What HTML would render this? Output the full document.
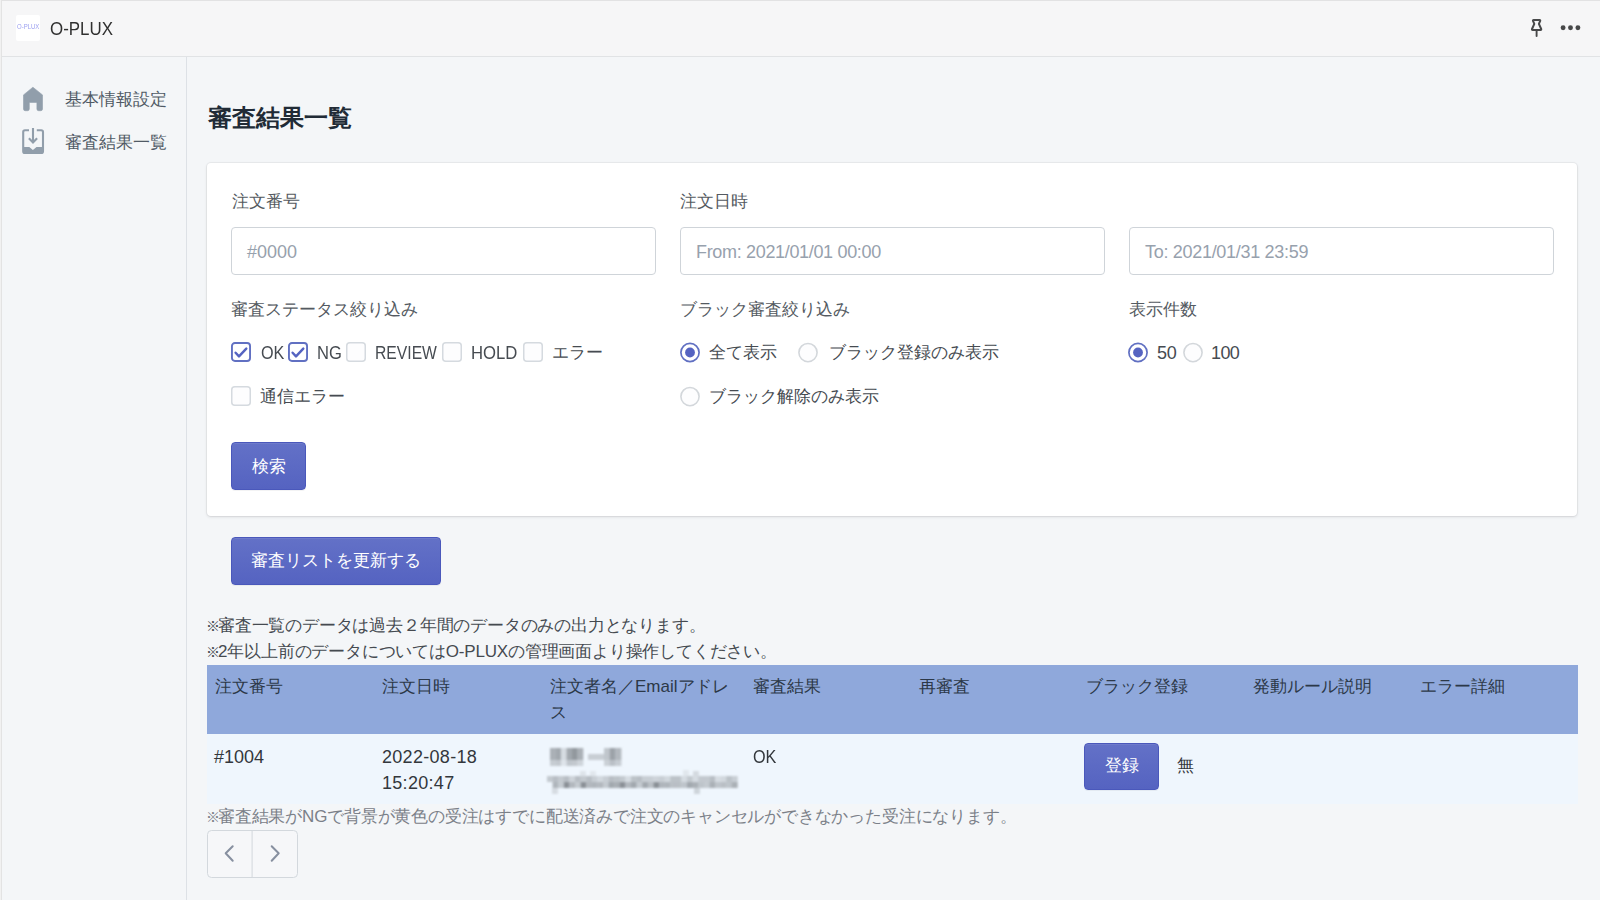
<!DOCTYPE html>
<html lang="ja">
<head>
<meta charset="utf-8">
<title>O-PLUX</title>
<style>
*{box-sizing:border-box;}
html,body{margin:0;padding:0;}
body{width:1600px;height:900px;overflow:hidden;position:relative;background:#f4f6f8;font-family:"Liberation Sans",sans-serif;color:#212b36;font-size:17px;}
.abs{position:absolute;}
svg{display:block;}
.L{font-size:18px !important;}
.topbar{left:0;top:0;width:1600px;height:57px;background:#f6f6f7;border-top:1px solid #e2e2e3;border-bottom:1px solid #e1e3e5;}
.lborder{left:0;top:0;width:2px;height:900px;background:linear-gradient(90deg,#f1f1f1 0,#f1f1f1 1px,#e3e3e3 1px,#e3e3e3 2px);}
.logo{left:16px;top:15px;width:24px;height:26px;background:#fff;border-radius:2px;}
.logo span{position:absolute;left:1.3px;top:7px;font-size:7.5px;line-height:10px;color:#9a9ef0;transform:scaleX(0.8);transform-origin:0 0;white-space:nowrap;}
.apptitle{left:50px;top:17px;font-size:19px;line-height:24px;transform:scaleX(0.89);transform-origin:0 0;color:#303030;}
.side{left:0;top:57px;width:187px;height:843px;border-right:1px solid #dde1e6;}
.nav{left:65px;font-size:17px;line-height:22px;color:#505a65;white-space:nowrap;}
h1{position:absolute;margin:0;left:208px;top:102px;font-size:24px;line-height:32px;font-weight:bold;color:#212b36;white-space:nowrap;}
.card{left:207px;top:163px;width:1370px;height:353px;background:#fff;border-radius:4px;box-shadow:0 0 0 1px rgba(63,63,68,.05),0 1px 3px 0 rgba(63,63,68,.15);}
.lbl{font-size:17px;line-height:22px;color:#545a61;white-space:nowrap;}
.input{height:48px;width:425px;border:1px solid #cfd4d9;border-radius:4px;background:#fff;}
.input span{position:absolute;left:15px;top:12px;font-size:18px;line-height:24px;color:#97a1ad;white-space:nowrap;}
.opt{font-size:17px;line-height:22px;color:#464b51;white-space:nowrap;}
.btn{height:48px;border-radius:4px;background:linear-gradient(180deg,#6371c7,#5563c1);border:1px solid #4a58bb;box-shadow:inset 0 1px 0 0 #6f7bcb,0 1px 0 0 rgba(22,29,37,.05);color:#fff;font-size:17px;line-height:22px;}
.btn span{position:absolute;top:12px;left:0;right:0;text-align:center;white-space:nowrap;}
.note{left:206px;font-size:17px;letter-spacing:-0.19px;line-height:26px;color:#454a50;white-space:nowrap;}
.k{font-size:13.5px;letter-spacing:-2px;}
.thead{left:207px;top:665px;width:1371px;height:69px;background:#8fa8db;}
.trow{left:207px;top:734px;width:1371px;height:70px;background:#eff6fd;}
.th{top:674px;font-size:17px;line-height:26px;color:#2c3848;white-space:nowrap;}
.td{font-size:17px;line-height:26px;color:#33373c;white-space:nowrap;}
</style>
</head>
<body>
<div class="abs topbar"></div>
<div class="abs logo"><span>O-PLUX</span></div>
<div class="abs apptitle">O-PLUX</div>
<svg class="abs" style="left:1522px;top:12px" width="30" height="30" viewBox="0 0 30 30">
  <path d="M11.6 8 H17.6 Q18.5 8 18.2 8.9 L16.9 11.8 L19.2 17 Q19.5 17.9 18.6 17.9 H10.6 Q9.7 17.9 10 17 L12.3 11.8 L11 8.9 Q10.7 8 11.6 8 Z" fill="none" stroke="#474849" stroke-width="2" stroke-linejoin="round"/>
  <path d="M14.6 18.5 V24" fill="none" stroke="#474849" stroke-width="1.9" stroke-linecap="round"/>
</svg>
<svg class="abs" style="left:1556px;top:18px" width="30" height="20" viewBox="0 0 30 20">
  <circle cx="7.1" cy="9.8" r="2.45" fill="#474849"/><circle cx="14.5" cy="9.8" r="2.45" fill="#474849"/><circle cx="21.9" cy="9.8" r="2.45" fill="#474849"/>
</svg>

<div class="abs side"></div>
<div class="abs lborder"></div>
<svg class="abs" style="left:18px;top:82px" width="30" height="34" viewBox="0 0 30 34">
  <path d="M14.9 5.2 L24.5 12.9 V27 Q24.5 28.7 22.8 28.7 H20.6 Q18.9 28.7 18.9 27 V20.4 H11.3 V27 Q11.3 28.7 9.6 28.7 H7.2 Q5.5 28.7 5.5 27 V12.9 Z" fill="#919eab" stroke="#919eab" stroke-width="0.6" stroke-linejoin="round"/>
</svg>
<div class="abs nav" style="top:89px">基本情報設定</div>
<svg class="abs" style="left:18px;top:124px" width="30" height="34" viewBox="0 0 30 34">
  <path d="M11 6.3 H7 Q5.2 6.3 5.2 8.1 V27.2 Q5.2 29 7 29 H23.2 Q25 29 25 27.2 V8.1 Q25 6.3 23.2 6.3 H18.8" fill="none" stroke="#919eab" stroke-width="2.1"/>
  <path d="M5 23 H11.3 L14.9 25.9 L18.5 23 H25.2 V27.2 Q25.2 29.3 23 29.3 H7 Q5 29.3 5 27.2 Z" fill="#919eab"/>
  <path d="M15 4 V18 M10.9 14.2 L15 18.4 L19.1 14.2" fill="none" stroke="#919eab" stroke-width="2.1"/>
</svg>
<div class="abs nav" style="top:132px">審査結果一覧</div>

<h1>審査結果一覧</h1>

<div class="abs card"></div>
<div class="abs lbl" style="left:232px;top:191px">注文番号</div>
<div class="abs lbl" style="left:680px;top:191px">注文日時</div>
<div class="abs input" style="left:231px;top:227px"><span>#0000</span></div>
<div class="abs input" style="left:680px;top:227px"><span style="letter-spacing:-0.33px">From: 2021/01/01 00:00</span></div>
<div class="abs input" style="left:1129px;top:227px"><span style="letter-spacing:-0.3px">To: 2021/01/31 23:59</span></div>

<div class="abs lbl" style="left:231px;top:299px">審査ステータス絞り込み</div>
<div class="abs lbl" style="left:680px;top:299px">ブラック審査絞り込み</div>
<div class="abs lbl" style="left:1129px;top:299px">表示件数</div>

<div class="abs" style="left:231px;top:342px;width:20px;height:20px"><svg width="20" height="20" viewBox="0 0 20 20"><rect x="0.95" y="0.95" width="18.1" height="18.1" rx="3" fill="#fff" stroke="#6170c2" stroke-width="1.9"/><path d="M4.6 10.7 L8 14.4 L15.3 6.6" fill="none" stroke="#5563c1" stroke-width="2.4" stroke-linecap="round" stroke-linejoin="round"/></svg></div>
<div class="abs opt L" style="left:261px;top:342px;transform:scaleX(0.9);transform-origin:0 0">OK</div>
<div class="abs" style="left:288px;top:342px;width:20px;height:20px"><svg width="20" height="20" viewBox="0 0 20 20"><rect x="0.95" y="0.95" width="18.1" height="18.1" rx="3" fill="#fff" stroke="#6170c2" stroke-width="1.9"/><path d="M4.6 10.7 L8 14.4 L15.3 6.6" fill="none" stroke="#5563c1" stroke-width="2.4" stroke-linecap="round" stroke-linejoin="round"/></svg></div>
<div class="abs opt L" style="left:317px;top:342px;transform:scaleX(0.92);transform-origin:0 0">NG</div>
<div class="abs" style="left:346px;top:342px;width:20px;height:20px"><svg width="20" height="20" viewBox="0 0 20 20"><rect x="0.75" y="0.75" width="18.5" height="18.5" rx="3" fill="#fdfdfe" stroke="#d5dadf" stroke-width="1.5"/></svg></div>
<div class="abs opt L" style="left:375px;top:342px;transform:scaleX(0.872);transform-origin:0 0">REVIEW</div>
<div class="abs" style="left:442px;top:342px;width:20px;height:20px"><svg width="20" height="20" viewBox="0 0 20 20"><rect x="0.75" y="0.75" width="18.5" height="18.5" rx="3" fill="#fdfdfe" stroke="#d5dadf" stroke-width="1.5"/></svg></div>
<div class="abs opt L" style="left:471px;top:342px;transform:scaleX(0.928);transform-origin:0 0">HOLD</div>
<div class="abs" style="left:523px;top:342px;width:20px;height:20px"><svg width="20" height="20" viewBox="0 0 20 20"><rect x="0.75" y="0.75" width="18.5" height="18.5" rx="3" fill="#fdfdfe" stroke="#d5dadf" stroke-width="1.5"/></svg></div>
<div class="abs opt" style="left:552px;top:342px">エラー</div>
<div class="abs" style="left:231px;top:386px;width:20px;height:20px"><svg width="20" height="20" viewBox="0 0 20 20"><rect x="0.75" y="0.75" width="18.5" height="18.5" rx="3" fill="#fdfdfe" stroke="#d5dadf" stroke-width="1.5"/></svg></div>
<div class="abs opt" style="left:260px;top:386px">通信エラー</div>

<div class="abs" style="left:680px;top:342px;width:20px;height:21px"><svg width="20" height="21" viewBox="0 0 20 21"><circle cx="10" cy="10.5" r="9.1" fill="#fff" stroke="#6170c2" stroke-width="1.7"/><circle cx="10" cy="10.5" r="4.9" fill="#5563c1"/></svg></div>
<div class="abs opt" style="left:709px;top:342px">全て表示</div>
<div class="abs" style="left:798px;top:342px;width:20px;height:21px"><svg width="20" height="21" viewBox="0 0 20 21"><circle cx="10" cy="10.6" r="9.1" fill="#fdfdfe" stroke="#d3d7db" stroke-width="1.6"/></svg></div>
<div class="abs opt" style="left:829px;top:342px">ブラック登録のみ表示</div>
<div class="abs" style="left:680px;top:386px;width:20px;height:21px"><svg width="20" height="21" viewBox="0 0 20 21"><circle cx="10" cy="10.6" r="9.1" fill="#fdfdfe" stroke="#d3d7db" stroke-width="1.6"/></svg></div>
<div class="abs opt" style="left:709px;top:386px">ブラック解除のみ表示</div>

<div class="abs" style="left:1128px;top:342px;width:20px;height:21px"><svg width="20" height="21" viewBox="0 0 20 21"><circle cx="10" cy="10.5" r="9.1" fill="#fff" stroke="#6170c2" stroke-width="1.7"/><circle cx="10" cy="10.5" r="4.9" fill="#5563c1"/></svg></div>
<div class="abs opt L" style="left:1157px;top:342px;letter-spacing:-0.3px">50</div>
<div class="abs" style="left:1183px;top:342px;width:20px;height:21px"><svg width="20" height="21" viewBox="0 0 20 21"><circle cx="10" cy="10.6" r="9.1" fill="#fdfdfe" stroke="#d3d7db" stroke-width="1.6"/></svg></div>
<div class="abs opt L" style="left:1211px;top:342px;letter-spacing:-0.6px">100</div>

<div class="abs btn" style="left:231px;top:442px;width:75px"><span style="top:13px">検索</span></div>
<div class="abs btn" style="left:231px;top:537px;width:210px"><span>審査リストを更新する</span></div>

<div class="abs note" style="top:613px"><span class="k">※</span>審査一覧のデータは過去２年間のデータのみの出力となります。</div>
<div class="abs note" style="top:639px"><span class="k">※</span>2年以上前のデータについてはO-PLUXの管理画面より操作してください。</div>

<div class="abs thead"></div>
<div class="abs th" style="left:215px">注文番号</div>
<div class="abs th" style="left:382px">注文日時</div>
<div class="abs th" style="left:550px">注文者名／Emailアドレ<br>ス</div>
<div class="abs th" style="left:753px">審査結果</div>
<div class="abs th" style="left:919px">再審査</div>
<div class="abs th" style="left:1086px">ブラック登録</div>
<div class="abs th" style="left:1253px">発動ルール説明</div>
<div class="abs th" style="left:1420px">エラー詳細</div>

<div class="abs trow"></div>
<div class="abs td L" style="left:214px;top:744px">#1004</div>
<div class="abs td L" style="left:382px;top:744px;letter-spacing:0.3px">2022-08-18<br>15:20:47</div>
<div class="abs td L" style="left:753px;top:744px;transform:scaleX(0.9);transform-origin:0 0">OK</div>
<svg class="abs" style="left:540px;top:740px" width="200" height="60" viewBox="0 0 200 60" ><defs><filter id="bl" x="-5%" y="-20%" width="110%" height="140%"><feGaussianBlur stdDeviation="0.9"/></filter></defs><g filter="url(#bl)"><rect x="10.0" y="8" width="5.8" height="12" fill="rgb(170,176,182)"/><rect x="10.0" y="20" width="5.8" height="6" fill="rgb(198,204,210)"/><rect x="15.5" y="8" width="5.8" height="12" fill="rgb(162,168,174)"/><rect x="15.5" y="20" width="5.8" height="6" fill="rgb(194,200,206)"/><rect x="21.0" y="8" width="5.8" height="12" fill="rgb(214,220,226)"/><rect x="21.0" y="20" width="5.8" height="6" fill="rgb(222,228,234)"/><rect x="26.5" y="8" width="5.8" height="12" fill="rgb(162,168,174)"/><rect x="26.5" y="20" width="5.8" height="6" fill="rgb(192,198,204)"/><rect x="32.0" y="8" width="5.8" height="12" fill="rgb(146,152,158)"/><rect x="32.0" y="20" width="5.8" height="6" fill="rgb(194,200,206)"/><rect x="37.5" y="8" width="5.8" height="12" fill="rgb(170,176,182)"/><rect x="37.5" y="20" width="5.8" height="6" fill="rgb(206,212,218)"/><rect x="48.0" y="14" width="16.3" height="6" fill="rgb(200,206,212)"/><rect x="64.0" y="8" width="6.0" height="12" fill="rgb(192,198,204)"/><rect x="64.0" y="20" width="6.0" height="6" fill="rgb(202,208,214)"/><rect x="69.7" y="8" width="6.0" height="12" fill="rgb(156,162,168)"/><rect x="69.7" y="20" width="6.0" height="6" fill="rgb(186,192,198)"/><rect x="75.4" y="8" width="6.0" height="12" fill="rgb(178,184,190)"/><rect x="75.4" y="20" width="6.0" height="6" fill="rgb(198,204,210)"/><rect x="7.0" y="36" width="5.9" height="6" fill="rgb(195,201,207)"/><rect x="12.6" y="36" width="5.9" height="6" fill="rgb(184,190,196)"/><rect x="12.6" y="42" width="5.9" height="6" fill="rgb(175,181,187)"/><rect x="18.2" y="36" width="5.9" height="6" fill="rgb(195,201,207)"/><rect x="18.2" y="42" width="5.9" height="6" fill="rgb(196,202,208)"/><rect x="23.8" y="36" width="5.9" height="6" fill="rgb(184,190,196)"/><rect x="23.8" y="42" width="5.9" height="6" fill="rgb(138,144,150)"/><rect x="29.4" y="36" width="5.9" height="6" fill="rgb(205,211,217)"/><rect x="29.4" y="42" width="5.9" height="6" fill="rgb(178,184,190)"/><rect x="35.0" y="36" width="5.9" height="6" fill="rgb(184,190,196)"/><rect x="35.0" y="42" width="5.9" height="6" fill="rgb(196,202,208)"/><rect x="40.6" y="36" width="5.9" height="6" fill="rgb(195,201,207)"/><rect x="40.6" y="42" width="5.9" height="6" fill="rgb(138,144,150)"/><rect x="46.2" y="36" width="5.9" height="6" fill="rgb(184,190,196)"/><rect x="46.2" y="42" width="5.9" height="6" fill="rgb(178,184,190)"/><rect x="51.8" y="36" width="5.9" height="6" fill="rgb(200,206,212)"/><rect x="51.8" y="42" width="5.9" height="6" fill="rgb(175,181,187)"/><rect x="57.4" y="36" width="5.9" height="6" fill="rgb(210,216,222)"/><rect x="57.4" y="42" width="5.9" height="6" fill="rgb(178,184,190)"/><rect x="63.0" y="36" width="5.9" height="6" fill="rgb(200,206,212)"/><rect x="63.0" y="42" width="5.9" height="6" fill="rgb(196,202,208)"/><rect x="68.6" y="36" width="5.9" height="6" fill="rgb(184,190,196)"/><rect x="68.6" y="42" width="5.9" height="6" fill="rgb(162,168,174)"/><rect x="74.2" y="36" width="5.9" height="6" fill="rgb(188,194,200)"/><rect x="74.2" y="42" width="5.9" height="6" fill="rgb(168,174,180)"/><rect x="79.8" y="36" width="5.9" height="6" fill="rgb(195,201,207)"/><rect x="79.8" y="42" width="5.9" height="6" fill="rgb(138,144,150)"/><rect x="85.4" y="36" width="5.9" height="6" fill="rgb(214,220,226)"/><rect x="85.4" y="42" width="5.9" height="6" fill="rgb(178,184,190)"/><rect x="91.0" y="36" width="5.9" height="6" fill="rgb(188,194,200)"/><rect x="91.0" y="42" width="5.9" height="6" fill="rgb(162,168,174)"/><rect x="96.6" y="36" width="5.9" height="6" fill="rgb(184,190,196)"/><rect x="96.6" y="42" width="5.9" height="6" fill="rgb(196,202,208)"/><rect x="102.2" y="36" width="5.9" height="6" fill="rgb(200,206,212)"/><rect x="102.2" y="42" width="5.9" height="6" fill="rgb(162,168,174)"/><rect x="107.8" y="36" width="5.9" height="6" fill="rgb(200,206,212)"/><rect x="107.8" y="42" width="5.9" height="6" fill="rgb(185,191,197)"/><rect x="113.4" y="36" width="5.9" height="6" fill="rgb(205,211,217)"/><rect x="113.4" y="42" width="5.9" height="6" fill="rgb(138,144,150)"/><rect x="119.0" y="36" width="5.9" height="6" fill="rgb(200,206,212)"/><rect x="119.0" y="42" width="5.9" height="6" fill="rgb(175,181,187)"/><rect x="124.6" y="36" width="5.9" height="6" fill="rgb(210,216,222)"/><rect x="124.6" y="42" width="5.9" height="6" fill="rgb(175,181,187)"/><rect x="130.2" y="36" width="5.9" height="6" fill="rgb(188,194,200)"/><rect x="130.2" y="42" width="5.9" height="6" fill="rgb(185,191,197)"/><rect x="135.8" y="36" width="5.9" height="6" fill="rgb(188,194,200)"/><rect x="135.8" y="42" width="5.9" height="6" fill="rgb(185,191,197)"/><rect x="141.4" y="36" width="5.9" height="6" fill="rgb(214,220,226)"/><rect x="141.4" y="42" width="5.9" height="6" fill="rgb(190,196,202)"/><rect x="147.0" y="36" width="5.9" height="6" fill="rgb(195,201,207)"/><rect x="147.0" y="42" width="5.9" height="6" fill="rgb(162,168,174)"/><rect x="152.6" y="36" width="5.9" height="6" fill="rgb(214,220,226)"/><rect x="152.6" y="42" width="5.9" height="6" fill="rgb(170,176,182)"/><rect x="158.2" y="36" width="5.9" height="6" fill="rgb(195,201,207)"/><rect x="158.2" y="42" width="5.9" height="6" fill="rgb(190,196,202)"/><rect x="163.8" y="36" width="5.9" height="6" fill="rgb(195,201,207)"/><rect x="163.8" y="42" width="5.9" height="6" fill="rgb(196,202,208)"/><rect x="169.4" y="36" width="5.9" height="6" fill="rgb(184,190,196)"/><rect x="169.4" y="42" width="5.9" height="6" fill="rgb(170,176,182)"/><rect x="175.0" y="36" width="5.9" height="6" fill="rgb(214,220,226)"/><rect x="175.0" y="42" width="5.9" height="6" fill="rgb(190,196,202)"/><rect x="180.6" y="36" width="5.9" height="6" fill="rgb(210,216,222)"/><rect x="180.6" y="42" width="5.9" height="6" fill="rgb(185,191,197)"/><rect x="186.2" y="36" width="5.9" height="6" fill="rgb(188,194,200)"/><rect x="186.2" y="42" width="5.9" height="6" fill="rgb(190,196,202)"/><rect x="191.8" y="36" width="5.9" height="6" fill="rgb(200,206,212)"/><rect x="191.8" y="42" width="5.9" height="6" fill="rgb(170,176,182)"/><rect x="12.0" y="48" width="5.9" height="6" fill="rgb(214,220,226)"/><rect x="40.0" y="31" width="5.9" height="5" fill="rgb(222,228,234)"/><rect x="50.0" y="31" width="5.9" height="5" fill="rgb(225,231,237)"/><rect x="153.0" y="31" width="5.9" height="5" fill="rgb(212,218,224)"/><rect x="154.0" y="48" width="5.9" height="6" fill="rgb(206,212,218)"/><rect x="143.0" y="30" width="5.9" height="6" fill="rgb(225,231,237)"/></g></svg>
<div class="abs btn" style="left:1084px;top:743px;width:75px;height:47px"><span style="top:11px">登録</span></div>
<div class="abs td" style="left:1177px;top:753px">無</div>

<div class="abs note" style="top:804px;color:#7b8088"><span class="k">※</span>審査結果がNGで背景が黄色の受注はすでに配送済みで注文のキャンセルができなかった受注になります。</div>

<svg class="abs" style="left:207px;top:830px" width="91" height="48" viewBox="0 0 91 48">
  <rect x="0.5" y="0.5" width="90" height="47" rx="4" fill="#f6f7f9" stroke="#d3d8dd" stroke-width="1"/>
  <rect x="44.6" y="0.5" width="1" height="47" fill="#d3d8dd"/>
  <path d="M25.7 16.3 L18.7 23.3 L25.7 30.8" fill="none" stroke="#8790a0" stroke-width="2" stroke-linecap="round" stroke-linejoin="round"/>
  <path d="M64.7 16.3 L71.7 23.3 L64.7 30.8" fill="none" stroke="#8790a0" stroke-width="2" stroke-linecap="round" stroke-linejoin="round"/>
</svg>
</body>
</html>
